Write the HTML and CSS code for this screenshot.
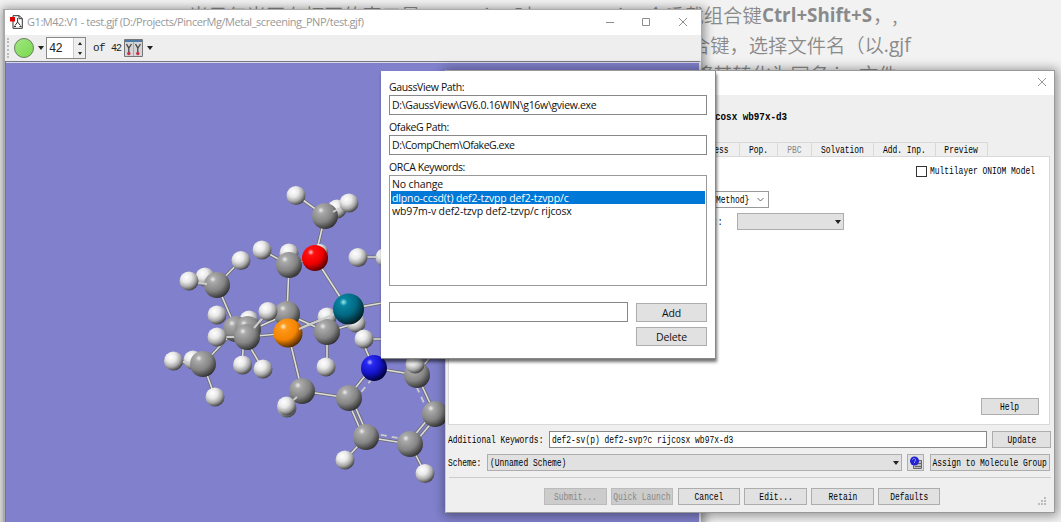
FILE: index.html
```html
<!DOCTYPE html>
<html lang="zh">
<head>
<meta charset="utf-8">
<title>GaussView</title>
<link rel="stylesheet" href="styles.css">
</head>
<body>
<div class="desktop">
  <div class="article">
    <p class="line"><span class="lead">当只仅当正在打开的窗口是</span><span class="w94">GaussView</span><span class="w39">时，</span><span class="w65">ORcam</span><span class="w26">iCA</span><span class="w117">会重载组合键</span><b class="keys">Ctrl+Shift+S</b><span>，,</span></p>
    <p class="line second"><span>合键，选择文件名（以</span><span class="lat">.gjf</span></p>
    <p class="line third"><span>将其转化为同名</span><span class="inp">.inp</span><span>文件</span></p>
  </div>

  <section class="window main">
    <header class="titlebar">
      <svg class="app-icon" width="14" height="14" viewBox="0 0 14 14"><path d="M3 .7h6.3l3 3v9.6H3z" fill="#fff" stroke="#333"/><path d="M9 .7v3h3.3M7.6 3v4M7.6 7 5 10.5M7.6 7l2.8 3.5M4 11.500h2m3.500 0h2" fill="none" stroke="#333"/><path d="M0 2h5v4.500H0z" fill="#d00"/></svg>
      <span class="caption">G1:M42:V1 - test.gjf (D:/Projects/PincerMg/Metal_screening_PNP/test.gjf)</span>
      <svg class="controls" width="84" height="12" viewBox="0 0 84 12" fill="none" stroke="#8d8d8d"><path d="M1 6.500h8M37.500 2.500h7v7h-7zM74 2l8 8M82 2l-8 8"/></svg>
    </header>
    <div class="toolbar">
      <span class="handle"></span>
      <span class="ball"></span>
      <i class="arrow"></i>
      <div class="spin"><span class="num">42</span><span class="steps"><i class="up"></i><i class="down"></i></span></div>
      <span class="of">of</span><span class="total">42</span>
      <svg class="mol-icon" width="19" height="18" viewBox="0 0 19 18"><path d="M.5.5h18v17H.5z" fill="#d5d5d8" stroke="#777"/><path d="M1 1h17v2H1z" fill="#4c7aa5"/><path d="M9.500 3v14" stroke="#aaa"/><path d="M2.500 5l2.300 4L7.500 5M4.800 9v5M11.500 5l2.300 4 2.700-4M13.800 9v5" stroke="#444" fill="none" stroke-width="1.300"/><circle cx="4.800" cy="14.500" r="1.700" fill="#c34"/><circle cx="13.800" cy="14.500" r="1.700" fill="#c34"/></svg>
      <i class="arrow"></i>
    </div>
    <div class="viewport">
      <svg class="molecule" width="693" height="459" viewBox="6 63 693 459">
        <defs>
          <radialGradient id="h" cx=".36" cy=".3" r=".72"><stop offset="0" stop-color="#fff"/><stop offset=".38" stop-color="#e8e8e8"/><stop offset=".7" stop-color="#aaa"/><stop offset="1" stop-color="#444"/></radialGradient>
          <radialGradient id="c" cx=".34" cy=".28" r=".76"><stop offset="0" stop-color="#eee"/><stop offset=".16" stop-color="#aaa"/><stop offset=".6" stop-color="#848484"/><stop offset="1" stop-color="#303030"/></radialGradient>
          <radialGradient id="o" cx=".34" cy=".28" r=".76"><stop offset="0" stop-color="#fcc"/><stop offset=".16" stop-color="#f11"/><stop offset=".6" stop-color="#ee0000"/><stop offset="1" stop-color="#500"/></radialGradient>
          <radialGradient id="p" cx=".34" cy=".28" r=".76"><stop offset="0" stop-color="#fec"/><stop offset=".16" stop-color="#ff981a"/><stop offset=".6" stop-color="#f48400"/><stop offset="1" stop-color="#4c2800"/></radialGradient>
          <radialGradient id="n" cx=".34" cy=".28" r=".76"><stop offset="0" stop-color="#bbf"/><stop offset=".16" stop-color="#2a2af4"/><stop offset=".55" stop-color="#1414cc"/><stop offset="1" stop-color="#003"/></radialGradient>
          <radialGradient id="m" cx=".34" cy=".28" r=".76"><stop offset="0" stop-color="#9ee"/><stop offset=".16" stop-color="#0884a2"/><stop offset=".55" stop-color="#036882"/><stop offset="1" stop-color="#001c24"/></radialGradient>
          <g id="bonds"><path d="M296 195 325 216 349 203M325 216 315 258 348 309 382 303M262 250 289 265 315 258M289 265 287 314M358 257H385M241 260 217 285 189 281M217 285 236 329M287 314 327 332M288 333 348 309 374 368 417 375M268 312 247 337 217 337M247 337 288 333 302 391 349 398M249 331 287 314M236 329 203 364 173 361M203 364 215 397M242 365 244 337 263 369M327 332V367M327 332 356 323M364 339H385M302 391 286 407M366 437 345 460M410 444 425 473M366 437 410 444M347 399 364 438M351 397 368 436M373 366 348 397M417 375 435 414M433 413 408 443M438 415 413 445M415 364 432 340M421 368 442 344"/></g>
        </defs>
        <use href="#bonds" class="bond-edge"/><use href="#bonds" class="bond-core"/>
        <path class="dashed" d="M379 370 354 401M412 377 430 416M370 433 410 440"/>
        <g fill="url(#h)"><circle cx="337" cy="209" r="9.500"/><circle cx="289" cy="253" r="9.500"/><circle cx="320" cy="252" r="8"/><circle cx="205" cy="277" r="9.500"/><circle cx="249" cy="320" r="9.500"/><circle cx="327" cy="317" r="9.500"/><circle cx="356" cy="323" r="9.500"/><circle cx="193" cy="360" r="9.500"/><circle cx="287" cy="408" r="9.500"/></g>
        <g fill="url(#c)"><circle cx="325" cy="216" r="13"/><circle cx="289" cy="265" r="13"/><circle cx="217" cy="285" r="13"/><circle cx="287" cy="314" r="13"/><circle cx="236" cy="329" r="13"/><circle cx="248" cy="329" r="13"/><circle cx="327" cy="332" r="13"/><circle cx="247" cy="337" r="13"/><circle cx="203" cy="364" r="13"/><circle cx="302" cy="391" r="13"/><circle cx="349" cy="398" r="13"/><circle cx="366" cy="437" r="13"/><circle cx="410" cy="444" r="13"/><circle cx="435" cy="414" r="13"/><circle cx="417" cy="375" r="13"/></g>
        <g class="front"><path d="M333 212 345 205M192 282 207 284M220 337 234 337M265 315 254 328M177 361 190 363M291 402 297 397"/></g>
        <circle cx="315" cy="258" r="13" fill="url(#o)"/><circle cx="288" cy="333" r="14.500" fill="url(#p)"/><circle cx="374" cy="368" r="13" fill="url(#n)"/>
        <path class="front" d="M299 329 337 313"/>
        <circle cx="348.500" cy="309" r="15.500" fill="url(#m)"/>
        <g fill="url(#h)"><circle cx="296" cy="195.500" r="9.500"/><circle cx="349" cy="203" r="9.500"/><circle cx="262" cy="250" r="9.500"/><circle cx="358" cy="257.500" r="9.500"/><circle cx="385" cy="257.500" r="9.500"/><circle cx="241" cy="260.500" r="9.500"/><circle cx="189" cy="281" r="9.500"/><circle cx="217" cy="315" r="9.500"/><circle cx="268" cy="311.500" r="9.500"/><circle cx="217" cy="337" r="9.500"/><circle cx="364" cy="339" r="9.500"/><circle cx="326" cy="367" r="9.500"/><circle cx="242.500" cy="365" r="9.500"/><circle cx="263" cy="369" r="9.500"/><circle cx="173.500" cy="361" r="9.500"/><circle cx="215" cy="397" r="9.500"/><circle cx="286.500" cy="406" r="9.500"/><circle cx="345" cy="460" r="9.500"/><circle cx="425" cy="473.500" r="9.500"/><circle cx="415" cy="364" r="9.500"/></g>
      </svg>
    </div>
  </section>

  <section class="window calc">
    <header class="calc-title"><svg width="10" height="10" viewBox="0 0 10 10" stroke="#999" fill="none"><path d="M1 1l8 8M9 1 1 9"/></svg></header>
    <div class="calc-head"><b class="sun bold">cosx wb97x-d3</b></div>
    <nav class="tabs">
      <span class="tab process"><em class="sun">ess</em></span><span class="tab pop"><em class="sun">Pop.</em></span><span class="tab pbc"><em class="sun">PBC</em></span><span class="tab solv"><em class="sun">Solvation</em></span><span class="tab add"><em class="sun">Add. Inp.</em></span><span class="tab prev"><em class="sun">Preview</em></span>
    </nav>
    <div class="panel">
      <div class="oniom"><i class="check"></i><em class="sun left">Multilayer ONIOM Model</em></div>
      <div class="method"><em class="sun left">Method}</em><svg width="7" height="5" viewBox="0 0 7 5"><path d="M.5 1 3.500 4l3-3" fill="none" stroke="#666"/></svg></div>
      <div class="charge"><em class="sun left">::</em><div class="select small"><i class="arrow"></i></div></div>
      <button class="btn help"><em class="sun">Help</em></button>
    </div>
    <div class="row keywords"><em class="sun left label">Additional Keywords:</em><div class="field"><em class="sun left">def2-sv(p) def2-svp?c rijcosx wb97x-d3</em></div><button class="btn update"><em class="sun">Update</em></button></div>
    <div class="row scheme"><em class="sun left label">Scheme:</em><div class="select"><em class="sun left">(Unnamed Scheme)</em><i class="arrow"></i></div>
      <button class="btn icon"><svg width="14" height="14" viewBox="0 0 14 14"><path d="M6.500 4.500h6v8h-8v-3" fill="#bbb" stroke="#666"/><path d="M8 7.500h4M6 10.500h6" stroke="#666"/><circle cx="5.500" cy="5" r="4.500" fill="#2222d0"/><path d="M3.500 4c0-2 3.500-2 3 0S5.500 5 5.500 7" fill="none" stroke="#99f"/></svg></button>
      <button class="btn assign"><em class="sun">Assign to Molecule Group</em></button></div>
    <div class="rule"></div>
    <footer class="actions">
      <button class="btn off"><em class="sun">Submit...</em></button><button class="btn off"><em class="sun">Quick Launch</em></button><button class="btn"><em class="sun">Cancel</em></button><button class="btn"><em class="sun">Edit...</em></button><button class="btn"><em class="sun">Retain</em></button><button class="btn"><em class="sun">Defaults</em></button>
      <svg class="grip" width="8" height="8" viewBox="0 0 8 8" fill="#bbb"><path d="M6 0h2v2H6zM3 3h2v2H3zM6 3h2v2H6zM0 6h2v2H0zM3 6h2v2H3zM6 6h2v2H6z"/></svg>
    </footer>
  </section>

  <section class="window config">
    <label>GaussView Path:</label>
    <div class="input">D:\GaussView\GV6.0.16WIN\g16w\gview.exe</div>
    <label>OfakeG Path:</label>
    <div class="input exe">D:\CompChem\OfakeG.exe</div>
    <label>ORCA Keywords:</label>
    <ul class="list"><li>No change</li><li class="selected">dlpno-ccsd(t) def2-tzvpp def2-tzvpp/c</li><li>wb97m-v def2-tzvp def2-tzvp/c rijcosx</li></ul>
    <div class="entry"><div class="input"></div><div class="stack"><button class="btn">Add</button><button class="btn">Delete</button></div></div>
  </section>
</div>
</body>
</html>
```

FILE: styles.css
```css
* { box-sizing: border-box; }
body { margin: 0; }
p, ul { margin: 0; padding: 0; list-style: none; }
em { font-style: normal; }
.desktop { position: relative; width: 1061px; height: 522px; overflow: hidden; background: #f2f2f2; font-family: "Open Sans", "Noto Sans CJK SC", sans-serif; }
.window { position: absolute; }

.article { color: #8a8a8a; font: 19.3px/30px "Open Sans", "Noto Sans CJK SC", sans-serif; }
.article .line { display: flex; height: 30px; padding-left: 189px; white-space: nowrap; }
.article span { flex: none; font-family: "Noto Sans CJK SC", sans-serif; font-weight: 350; }
.article .lead { width: 231px; }
.w94 { width: 94px; } .w39 { width: 39px; } .w65 { width: 65px; } .w26 { width: 28px; } .w117 { width: 116px; }
.article .keys { width: 111px; font-size: 18.8px; font-weight: 700; font-family: "Open Sans", sans-serif; }
.article .second { padding-left: 691px; }
.article .third { padding-left: 694px; line-height: 28px; }
.article .lat { width: 30px; font-family: "Open Sans", sans-serif; font-weight: 400; }
.article .inp { width: 30px; }

.main { left: 3px; top: 9px; width: 699px; height: 520px; background: #eee; border: 1px solid #aaa; border-left-width: 2px; box-shadow: 1px 1px 9px 2px rgba(0,0,0,.38); }
.titlebar { display: flex; align-items: center; height: 25px; padding: 0 12px 2px 5px; background: #fff; color: #999; font-size: 11px; }
.caption { flex: 1; margin-left: 3px; letter-spacing: -.45px; white-space: nowrap; }
.toolbar { display: flex; align-items: center; height: 26px; padding-left: 2px; font-family: "Liberation Mono", monospace; font-size: 11px; color: #222; }
.handle { width: 2px; height: 20px; border-left: 2px dotted #bbb; }
.ball { width: 20px; height: 20px; margin-left: 5px; border-radius: 50%; border: 1px solid #678060; background: linear-gradient(135deg, #a2e583, #77da4c); }
.arrow { width: 0; height: 0; border: 3px solid transparent; border-top: 4px solid #222; border-bottom: 0; margin: 0 2px 0 4px; flex: none; }
.spin { display: flex; width: 40px; height: 22px; border: 1px solid #888; background: #fff; }
.num { flex: 1; padding: 4px 0 0 2px; font-size: 12px; line-height: 14px; letter-spacing: -.8px; }
.steps { width: 12px; display: flex; flex-direction: column; align-items: center; justify-content: space-around; background: #eee; border-left: 1px solid #ccc; }
.up, .down { border: 2.500px solid transparent; }
.up { border-top: 0; border-bottom: 3px solid #222; }
.down { border-bottom: 0; border-top: 3px solid #222; }
.of { margin-left: 7px; width: 18px; letter-spacing: -.7px; }
.total { width: 13px; font-size: 10px; letter-spacing: -1px; }
.viewport { height: 470px; border: 1px solid #77777f; border-right: 2px solid #ddd; box-shadow: inset 0 1px #d8d8e6; background: #8080cc; overflow: hidden; }
.molecule { display: block; margin-top: 1px; }
.bond-edge { fill: none; stroke: #6a6a6a; stroke-width: 3.200px; }
.bond-core { fill: none; stroke: #ddd; stroke-width: 1.600px; }
.dashed { fill: none; stroke: #ccc; stroke-width: 1.800px; stroke-dasharray: 6 5; }
.front { fill: none; stroke: #ccc; stroke-width: 2px; }

.sun { flex: none; display: block; font: 10.500px/12px "Liberation Mono", monospace; color: #000; white-space: pre; transform: scaleX(.757); }
.left { transform-origin: 0 50%; }
.bold { font-weight: 700; transform: scaleX(.88); transform-origin: 0 50%; }
.btn { display: flex; align-items: center; justify-content: center; flex: none; width: 62.500px; height: 17px; padding: 0; background: #e1e1e1; border: 1px solid #adadad; color: #111; }
.btn.off { background: #ccc; border-color: #bbb; }
.calc { left: 445px; top: 70px; width: 610px; height: 443px; background: #efefef; border: 1px solid #999; border-left-color: #ccc; box-shadow: 1px 1px 10px 2px rgba(0,0,0,.38); }
.calc-title { height: 24px; display: flex; justify-content: flex-end; padding: 6px 7px 0; background: #fff; }
.calc-head { height: 47px; padding: 16px 0 0 269px; }
.tabs { display: flex; height: 14px; padding-left: 239px; }
.tab { display: flex; align-items: center; justify-content: center; flex: none; border: 1px solid #d9d9d9; border-width: 1px 1px 0 0; }
.process { width: 55px; padding-left: 19px; } .pop { width: 38px; } .pbc { width: 34px; } .solv { width: 62px; } .add { width: 62px; } .prev { width: 52px; }
.pbc .sun, .off .sun { color: #888; }
.panel { height: 269px; margin: 0 4px 0 2px; background: #fff; border: 1px solid #d9d9d9; overflow: hidden; }
.oniom { display: flex; align-items: center; width: 130px; height: 12px; margin: 8px 0 0 467px; }
.check { width: 11px; height: 11px; flex: none; border: 1px solid #333; margin-right: 3px; }
.method { display: flex; align-items: center; width: 60px; height: 17px; margin: 14px 0 0 260px; padding-left: 6px; border: 1px solid #999; }
.method .sun { width: 41px; }
.charge { display: flex; align-items: center; margin: 5px 0 0 264px; }
.charge .sun { width: 24px; }
.select { display: flex; align-items: center; justify-content: space-between; height: 17px; background: #e1e1e1; border: 1px solid #adadad; padding-left: 3px; }
.select.small { width: 107px; justify-content: flex-end; }
.help { width: 58px; margin: 168px 0 0 532px; }
.row { display: flex; align-items: center; height: 17px; padding: 0 3px 0 2px; }
.keywords { margin-top: 6px; }
.keywords .label { width: 101px; }
.field { display: flex; align-items: center; width: 438px; height: 17px; padding-left: 2px; border: 1px solid #888; background: #fff; }
.update { width: 59px; margin-left: 5px; }
.scheme { margin-top: 6px; }
.scheme .label { width: 39px; }
.scheme .select { width: 415px; padding-left: 2px; }
.icon { width: 17px; margin: 0 6px 0 5px; }
.assign { width: 120px; }
.rule { height: 1px; margin: 6px 3px 0; background: #ccc; }
.actions { display: flex; gap: 4.300px; margin-top: 10px; padding-left: 98px; }
.grip { margin: 9px 0 0 93px; flex: none; }

.config { left: 381px; top: 71px; width: 335px; height: 288px; padding: 8px 8px 0; background: #fff; border-right: 1px solid #888; border-bottom: 1px solid #888; box-shadow: 1px 3px 3px rgba(0,0,0,.55); font-size: 10.500px; color: #111; }
.config label { display: block; height: 16px; line-height: 16px; letter-spacing: -.37px; }
.config .input { height: 20px; margin-bottom: 4px; padding-left: 2px; line-height: 18px; letter-spacing: -.3px; border: 1px solid #888; white-space: nowrap; }
.config .exe { letter-spacing: -.45px; }
.list { height: 111px; border: 1px solid #999; padding: 1px; }
.list li { height: 13.500px; line-height: 14px; padding-left: 1px; letter-spacing: -.13px; white-space: nowrap; }
.list .selected { background: #0078d7; color: #fff; }
.entry { display: flex; gap: 8px; margin-top: 16px; }
.entry .input { width: 239px; }
.stack { display: flex; flex-direction: column; gap: 5px; padding-top: 1px; }
.stack .btn { width: 71px; height: 19px; font: 10.500px "Open Sans", sans-serif; letter-spacing: -.1px; }
```
